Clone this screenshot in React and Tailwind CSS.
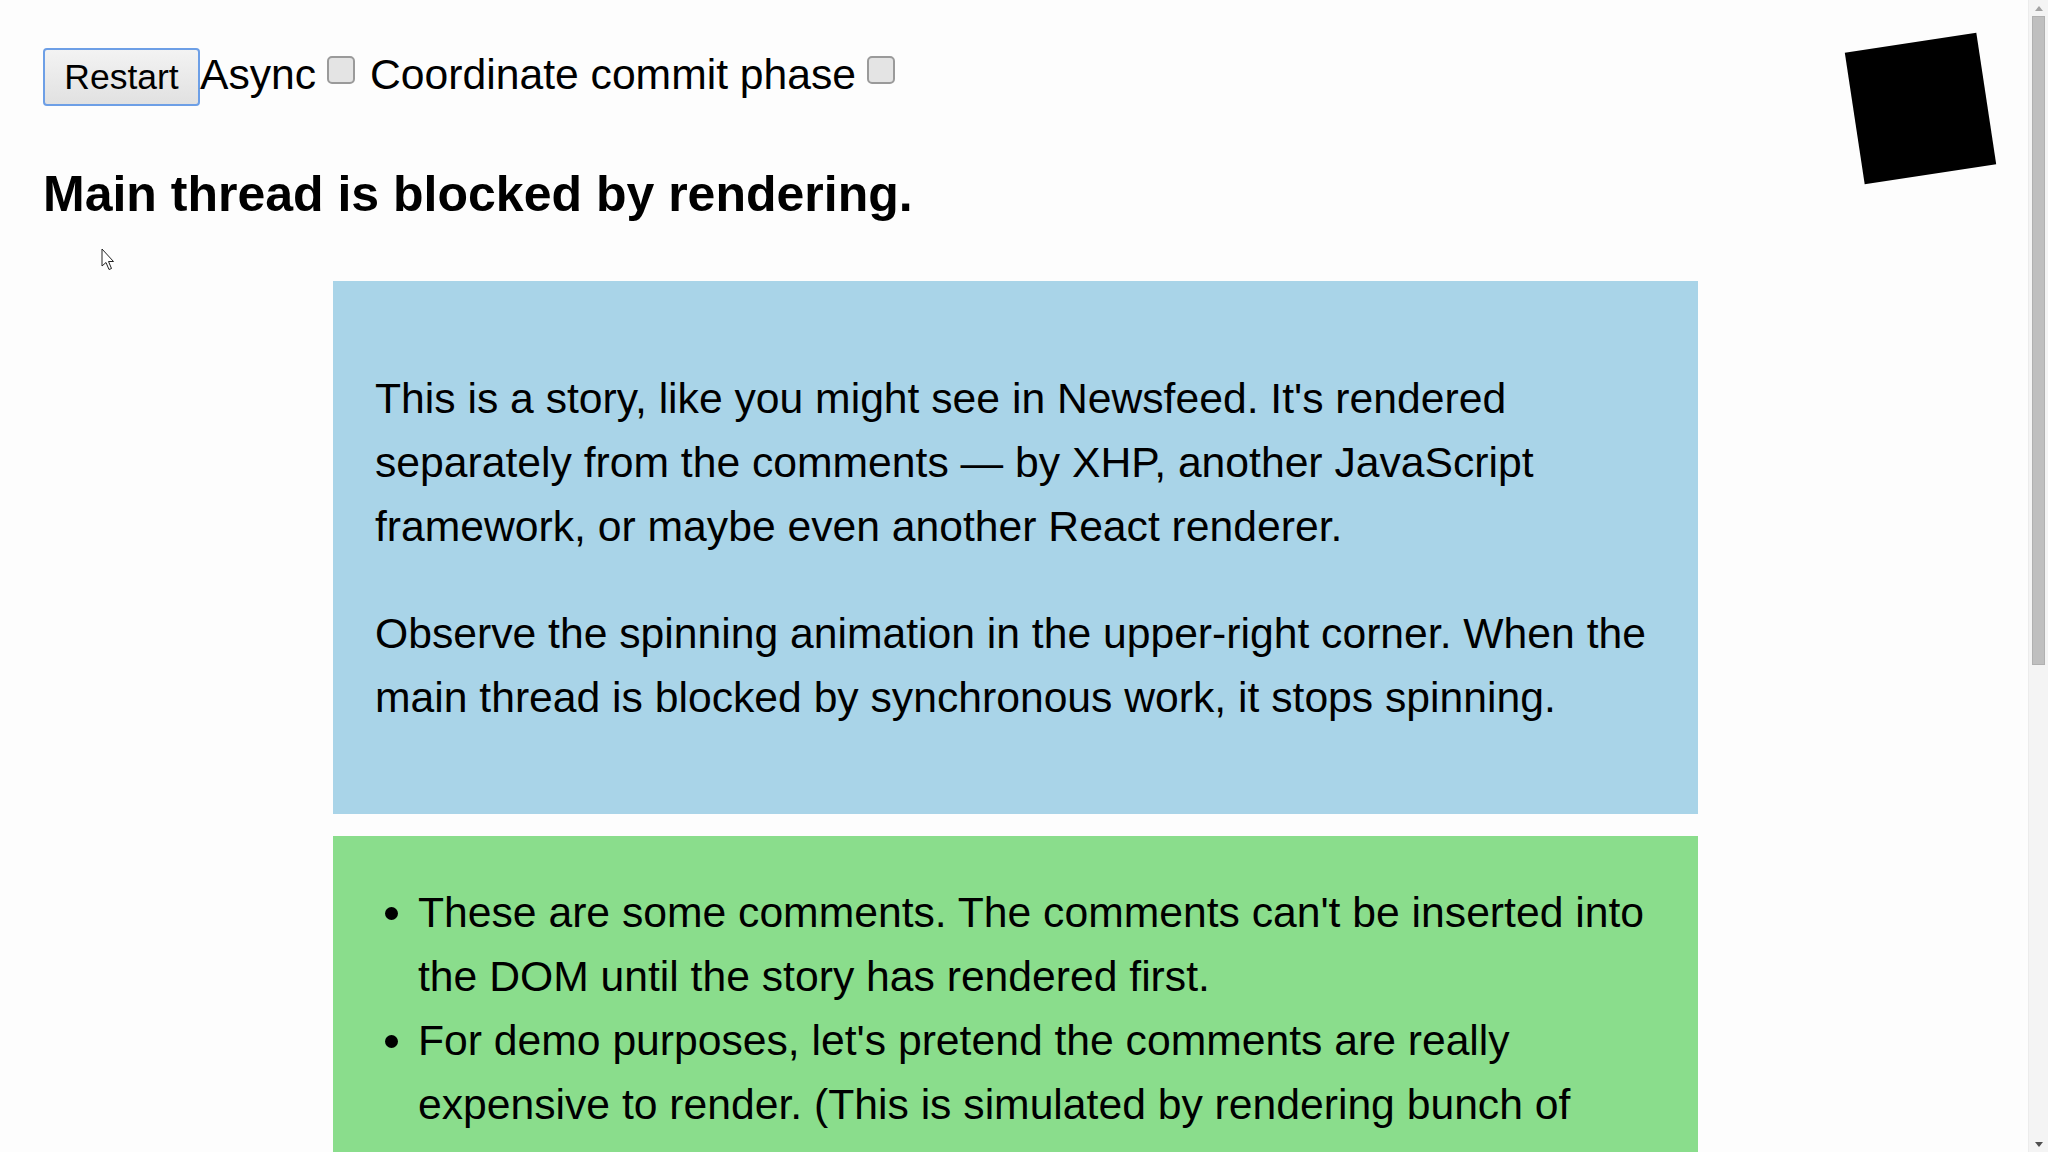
import React, { useState } from "react";

const font = { fontFamily: '"Liberation Sans", Arial, sans-serif' };

function Cursor() {
  return (
    <svg
      className="absolute left-[101px] top-[248px]"
      width="14"
      height="23"
      viewBox="0 0 14 23"
    >
      <path
        d="M1 1 L1 18 L5 14.5 L8 21.5 L10.5 20.5 L7.5 13.5 L12.5 13.5 Z"
        fill="#fff"
        stroke="#222"
        strokeWidth="1"
        strokeLinejoin="round"
      />
    </svg>
  );
}

function Scrollbar() {
  return (
    <div className="flex flex-col w-[20px] h-full bg-[#f4f4f4] border-l border-[#ececec]">
      <div className="flex items-center justify-center h-[16px]">
        <svg width="8" height="5" viewBox="0 0 8 5">
          <path d="M0 5 L4 0 L8 5 Z" fill="#a3a3a3" />
        </svg>
      </div>
      <div className="h-[649px] mx-[3px] bg-[#bfbfbf] border border-[#b0b0b0]" />
      <div className="flex-1" />
      <div className="flex items-center justify-center h-[16px]">
        <svg width="8" height="5" viewBox="0 0 8 5">
          <path d="M0 0 L4 5 L8 0 Z" fill="#505050" />
        </svg>
      </div>
    </div>
  );
}

function Checkbox({ checked, onChange }) {
  return (
    <span
      onClick={onChange}
      className={
        "inline-block w-[28px] h-[28px] mb-[5px] rounded-[5px] border-2 border-[#9a9a9a] " +
        (checked ? "bg-[#3b82f6]" : "bg-[#e4e4e4]")
      }
    />
  );
}

export default function App() {
  const [async, setAsync] = useState(false);
  const [coordinate, setCoordinate] = useState(false);

  return (
    <div className="flex w-full h-[1152px] overflow-hidden bg-[#fdfdfd] text-black" style={font}>
      <div className="relative flex-1 h-full overflow-hidden">
        <div className="flex items-baseline pt-[48px] pl-[43px]">
          <button className="w-[157px] h-[58px] py-[7px] border-2 border-[#6d9fe6] rounded-[4px] bg-gradient-to-b from-[#f3f3f3] to-[#e1e1e1] text-[35.5px] leading-[40px] text-center">
            Restart
          </button>
          <span className="text-[42.67px] leading-[49px]">Async</span>
          <span className="ml-[11px] mr-[3px]">
            <Checkbox checked={async} onChange={() => setAsync(!async)} />
          </span>
          <span className="text-[42.67px] leading-[49px] whitespace-pre"> Coordinate commit phase</span>
          <span className="ml-[11px]">
            <Checkbox checked={coordinate} onChange={() => setCoordinate(!coordinate)} />
          </span>
        </div>

        <h3 className="mt-[59px] ml-[43px] text-[50px] leading-[58px] font-bold">
          Main thread is blocked by rendering.
        </h3>

        <div className="w-[1365px] ml-[333px] mt-[58px] px-[42px] py-[85px] bg-[#a9d4e8] text-[42.67px] leading-[64px]">
          <p>
            This is a story, like you might see in Newsfeed. It's rendered
            separately from the comments — by XHP, another JavaScript
            framework, or maybe even another React renderer.
          </p>
          <p className="mt-[43px]">
            Observe the spinning animation in the upper-right corner. When the
            main thread is blocked by synchronous work, it stops spinning.
          </p>
        </div>

        <div className="w-[1365px] ml-[333px] mt-[22px] pl-[85px] pr-[42px] pt-[44px] pb-[85px] bg-[#8add8c] text-[42.67px] leading-[64px]">
          <ul className="list-disc">
            <li>
              These are some comments. The comments can't be inserted into the
              DOM until the story has rendered first.
            </li>
            <li>
              For demo purposes, let's pretend the comments are really
              expensive to render. (This is simulated by rendering bunch of
              divs in a busy loop.)
            </li>
          </ul>
        </div>

        <div className="absolute top-[42px] right-[41px] w-[133px] h-[133px] bg-black rotate-[-8.6deg]" />

        <Cursor />
      </div>
      <Scrollbar />
    </div>
  );
}
